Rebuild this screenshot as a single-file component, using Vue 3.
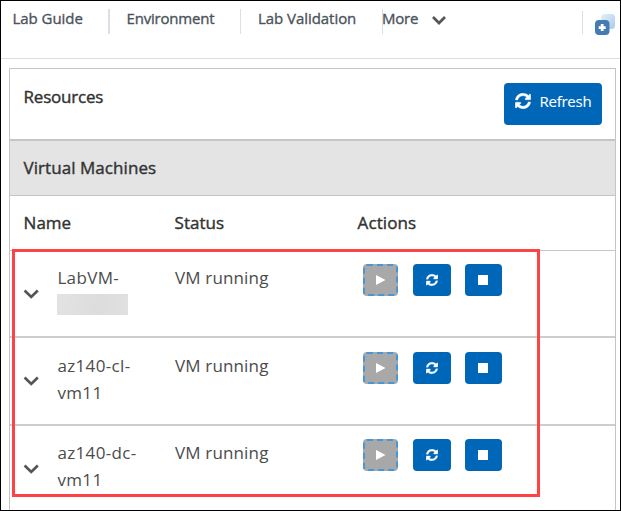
<script setup>
const vms = [
  { first: 'LabVM-', second: '', kind: 'lab' },
  { first: 'az140-cl-', second: 'vm11', kind: 'client' },
  { first: 'az140-dc-', second: 'vm11', kind: 'domain' },
]
const syncPath = 'M370.7 133.3C339.5 104 298.9 88 255.8 88c-77.5.1-144.3 53.2-162.8 126.9-1.3 5.4-6.1 9.1-11.7 9.1H24.1c-7.5 0-13.2-6.8-11.8-14.2C33.9 94.9 134.8 8 256 8c66.4 0 126.8 26.1 171.3 68.7L463 41c15.1-15.1 41-4.4 41 17v134c0 13.3-10.7 24-24 24H346c-21.4 0-32.1-25.9-17-41l41.7-41.7zM32 296h134c21.4 0 32.1 25.9 17 41l-41.8 41.8c31.3 29.3 71.8 45.3 114.9 45.2 77.4-.1 144.3-53.1 162.8-126.8 1.3-5.4 6.1-9.1 11.7-9.1h57.3c7.5 0 13.2 6.8 11.8 14.2C478.1 417.1 377.2 504 256 504c-66.4 0-126.8-26.1-171.3-68.7L49 471c-15.1 15.1-41 4.4-41-17V320c0-13.3 10.7-24 24-24z'
</script>

<template>
  <div class="page">
    <nav class="topbar">
      <span class="tab guide"><span>Lab Guide</span></span>
      <span class="tab environment"><span>Environment</span></span>
      <span class="tab validation"><span>Lab Validation</span></span>
      <span class="tab more"><span>More</span>
        <svg class="more-arrow" viewBox="0 0 16 10"><path d="M2 2l6 6 6-6" /></svg>
      </span>
      <span class="corner">
        <svg class="windows" viewBox="0 0 20 21">
          <defs>
            <linearGradient id="pane" x1="0" y1="0" x2="1" y2="1">
              <stop offset="0" stop-color="#e3f0fb" /><stop offset="1" stop-color="#aacbe9" />
            </linearGradient>
          </defs>
          <rect x="6" y="0" width="14" height="15" rx="3.5" fill="url(#pane)" />
          <rect x="0" y="6" width="14.5" height="15" rx="4" fill="#457bb3" />
          <path d="M7.2 10.1v7M3.7 13.6h7" stroke="#fff" stroke-width="2.8" />
        </svg>
      </span>
    </nav>

    <main class="panel">
      <header class="resources">
        <span class="w-resources">Resources</span>
        <button class="refresh">
          <svg class="sync" viewBox="0 0 512 512"><path :d="syncPath" /></svg>
          <span>Refresh</span>
        </button>
      </header>
      <div class="section"><span class="w-machines">Virtual Machines</span></div>
      <div class="columns">
        <span class="w-name">Name</span><span class="w-status">Status</span><span class="w-actions">Actions</span>
      </div>
      <div v-for="vm in vms" :key="vm.kind" class="row" :class="vm.kind">
        <svg class="expand" viewBox="0 0 16 10"><path d="M1.6 1.5L8.2 7.9l6.6-6.4" /></svg>
        <div class="name">
          <span class="first">{{ vm.first }}</span>
          <span v-if="vm.second" class="second">{{ vm.second }}</span>
          <span v-else class="mask"></span>
        </div>
        <span class="status">VM running</span>
        <div class="actions">
          <button class="start" disabled aria-label="Start">
            <svg viewBox="0 0 35 32"><rect x="1" y="1" width="33" height="30" rx="3" /><path d="M13 11l9.5 5-9.5 5z" /></svg>
          </button>
          <button class="restart" aria-label="Restart"><svg viewBox="0 0 512 512"><path :d="syncPath" /></svg></button>
          <button class="stop" aria-label="Stop"><i></i></button>
        </div>
      </div>
    </main>
    <div class="highlight"></div>
  </div>
</template>

<style>
body { margin: 0; background: #fff; }
</style>

<style scoped>
* { box-sizing: border-box; }
.page {
  position: relative;
  width: 621px;
  height: 511px;
  overflow: hidden;
  border: 1px solid #000;
  background: #fff;
  color: #333;
  font-family: "Open Sans", "Noto Sans", sans-serif;
}
svg { display: block; }
button { border: 0; padding: 0; margin: 0; font: inherit; }
.topbar {
  display: flex;
  height: 58px;
  padding-top: 8px;
  border-bottom: 1px solid #dedee2;
  color: #4c535b;
  font-size: 15px;
  line-height: 20px;
  white-space: nowrap;
  -webkit-text-stroke: 0.35px currentColor;
}
.tab { height: 25px; border-right: 1px solid #dce0e6; }
.tab > span { position: relative; top: -1px; }
.guide { width: 109px; padding-left: 11.5px; border-right-width: 2px; letter-spacing: -0.05px; }
.environment { width: 131px; padding-left: 16.5px; letter-spacing: -0.2px; }
.validation { width: 142px; padding-left: 17px; letter-spacing: -0.05px; }
.more { display: flex; width: 200px; border: 0; letter-spacing: -0.2px; margin-left: -1px; }
.more-arrow { width: 16px; height: 10px; margin: 6px 0 0 12.5px; }
.more-arrow path, .expand path { fill: none; stroke: #555; stroke-width: 2.7; }
.corner { height: 23px; margin-top: 2px; padding: 3px 0 0 12px; border-left: 1px solid #dce0e6; }
.windows { width: 20px; height: 21px; }
.panel {
  width: 607px;
  height: 460px;
  margin: 9px 0 0 8px;
  border: 1px solid #c5c5c5;
  font-size: 17px;
  white-space: nowrap;
}
.resources, .section, .columns { -webkit-text-stroke: 0.4px currentColor; }
.resources {
  display: flex;
  justify-content: space-between;
  height: 72px;
  padding: 14px 13px 0 13.5px;
  border-bottom: 2px solid #c5c5c5;
  line-height: 27px;
}
.refresh {
  display: flex;
  width: 98px;
  height: 42px;
  padding: 10px 0 0 11px;
  border-radius: 4px;
  background: #0067b8;
  color: #fff;
  font-size: 15px;
  line-height: 16px;
  letter-spacing: -0.25px;
  -webkit-text-stroke: 0.1px currentColor;
}
.sync { width: 16px; height: 16px; margin-right: 8.5px; fill: #fff; stroke: #fff; stroke-width: 12px; }
.section {
  height: 55px;
  padding-left: 13.5px;
  border-bottom: 1px solid #c5c5c5;
  background: #e4e4e4;
  line-height: 54px;
}
.columns {
  display: grid;
  grid-template-columns: 151px 183px 1fr;
  height: 55px;
  padding-left: 13.6px;
  border-bottom: 1px solid #c5c5c5;
  line-height: 54px;
}
.w-resources { letter-spacing: -0.2px; }
.w-machines { letter-spacing: 0.06px; }
.w-name, .w-status { letter-spacing: 0; }
.w-actions { letter-spacing: 0.1px; }
.row {
  display: grid;
  grid-template-columns: 34px 118px 188px 1fr;
  align-items: start;
  height: 87px;
  padding: 13px 0 0 13px;
  border-bottom: 2px solid #cfcccc;
  color: #4c4c4c;
  line-height: 27px;
}
.client { height: 88px; padding-top: 14px; }
.domain { height: 84px; border: 0; }
.expand { width: 16px; height: 10px; margin-top: 25px; }
.client .expand { margin-top: 24px; }
.name { display: flex; flex-direction: column; align-items: flex-start; letter-spacing: 0.36px; }
.first, .second { padding-left: 0.4px; }
.status { letter-spacing: 0.15px; }
.mask {
  width: 71px;
  height: 21px;
  margin-top: 3px;
  background: linear-gradient(100deg, #e3e3e3, #dcdcdc 60%, #e1e1e1);
}
.actions { display: flex; }
.actions button { height: 32px; border-radius: 4px; background: #0067b8; }
.actions .start { width: 35px; margin-right: 15px; background: #a8a8a8; }
.start svg { width: 35px; height: 32px; }
.start rect { fill: none; stroke: #4497da; stroke-width: 2; stroke-dasharray: 6 4; }
.start path { fill: #fff; }
.restart { display: grid; place-items: center; width: 38px; margin-right: 14px; }
.restart svg { width: 12px; height: 12px; fill: #fff; stroke: #fff; stroke-width: 14px; }
.stop { display: grid; justify-content: start; align-items: center; width: 37px; }
.actions .stop { padding-left: 13px; }
.stop i { width: 10px; height: 10px; background: #fff; }
.highlight {
  position: absolute;
  left: 11px;
  top: 248px;
  width: 528px;
  height: 248px;
  border: 3px solid #ff4245;
}
</style>
